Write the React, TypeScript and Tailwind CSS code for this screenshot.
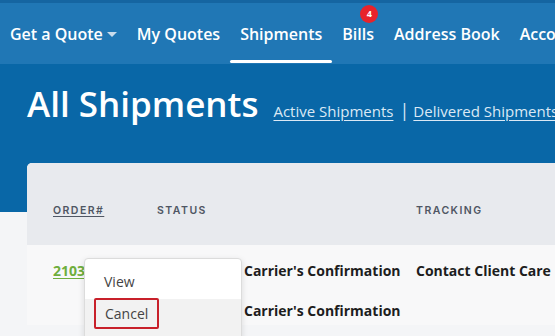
const navItems = ["Get a Quote", "My Quotes", "Shipments", "Bills", "Address Book", "Account"]

const NavItem = ({ label }: { label: string }) => {
  const active = label === "Shipments"
  return (
    <div className="relative flex h-full items-center">
      <span className="text-[16px] font-semibold text-white">{label}</span>
      {label === "Get a Quote" && (
        <svg width="10" height="6" viewBox="0 0 10 6" className="ml-[4px] mt-[2px]">
          <path d="M0 0 L10 0 L5 5 Z" fill="#c9dcec" />
        </svg>
      )}
      {label === "Bills" && (
        <span className="absolute left-[18px] top-[2px] flex h-[18px] w-[18px] items-center justify-center rounded-full bg-[#e8232b] text-[9px] font-bold text-white">
          4
        </span>
      )}
      {active && (
        <span className="absolute bottom-[1px] left-[-10px] right-[-10px] h-[3px] rounded-full bg-white" />
      )}
    </div>
  )
}

const App = () => {
  return (
    <div className="h-[336px] w-[555px] overflow-hidden bg-[#f4f5f7] font-['Open_Sans',sans-serif]">
      <div className="flex h-[64px] items-center gap-[20px] whitespace-nowrap border-t-[3px] border-[#1565a1] bg-[#2077b5] pl-[10px]">
        {navItems.map((item) => (
          <NavItem key={item} label={item} />
        ))}
      </div>

      <div className="h-[148px] bg-[#0967a7] pl-[27px] pt-[22px]">
        <div className="flex items-baseline whitespace-nowrap">
          <h1 className="text-[35px] font-semibold leading-[35px] text-white">All Shipments</h1>
          <a className="ml-[15px] text-[15px] text-[#dbe9f5] underline underline-offset-[3px]">Active Shipments</a>
          <span className="ml-[6px] mr-[4px] text-[18px] text-[#dbe9f5]">|</span>
          <a className="text-[15px] text-[#dbe9f5] underline underline-offset-[3px]">Delivered Shipments</a>
        </div>
      </div>

      <div className="relative ml-[27px] mt-[-49px] w-[600px] rounded-t-[5px] bg-[#f8f8f9]">
        <div className="flex h-[82px] items-center rounded-t-[5px] bg-[#e8eaee] pt-[14px] font-['Inter',sans-serif] text-[10.5px] font-semibold tracking-[0.14em] text-[#4f5663]">
          <span className="ml-[26px] w-[104px] underline underline-offset-2">ORDER#</span>
          <span className="w-[259px]">STATUS</span>
          <span>TRACKING</span>
        </div>
        <div className="flex h-[50px] items-center whitespace-nowrap pt-[1px] text-[14px] font-bold text-[#1d1d1d]">
          <span className="ml-[26px] w-[104px] text-[#6fae3c] underline underline-offset-2">2103</span>
          <span className="w-[259px]">Awaiting on Carrier's Confirmation</span>
          <span>Contact Client Care</span>
        </div>
        <div className="flex h-[30px] items-center whitespace-nowrap text-[14px] font-bold text-[#1d1d1d]">
          <span className="ml-[26px] w-[104px]" />
          <span className="w-[259px]">Awaiting on Carrier's Confirmation</span>
        </div>

        <div className="absolute left-[57px] top-[95px] w-[158px] rounded-[4px] border border-[#dcdcdc] bg-white pt-[4px] pb-[8px] shadow-[0_2px_6px_rgba(0,0,0,0.12)]">
          <div className="flex h-[36px] items-center pl-[19px] text-[14px] text-[#444]">View</div>
          <div className="flex h-[40px] items-start bg-[#f2f2f2] pl-[9px]">
            <span className="mt-[-1px] flex h-[31px] items-center rounded-[2px] border-2 border-[#c8202a] px-[9px] text-[14px] text-[#444]">
              Cancel
            </span>
          </div>
        </div>
      </div>
    </div>
  )
}

export default App
